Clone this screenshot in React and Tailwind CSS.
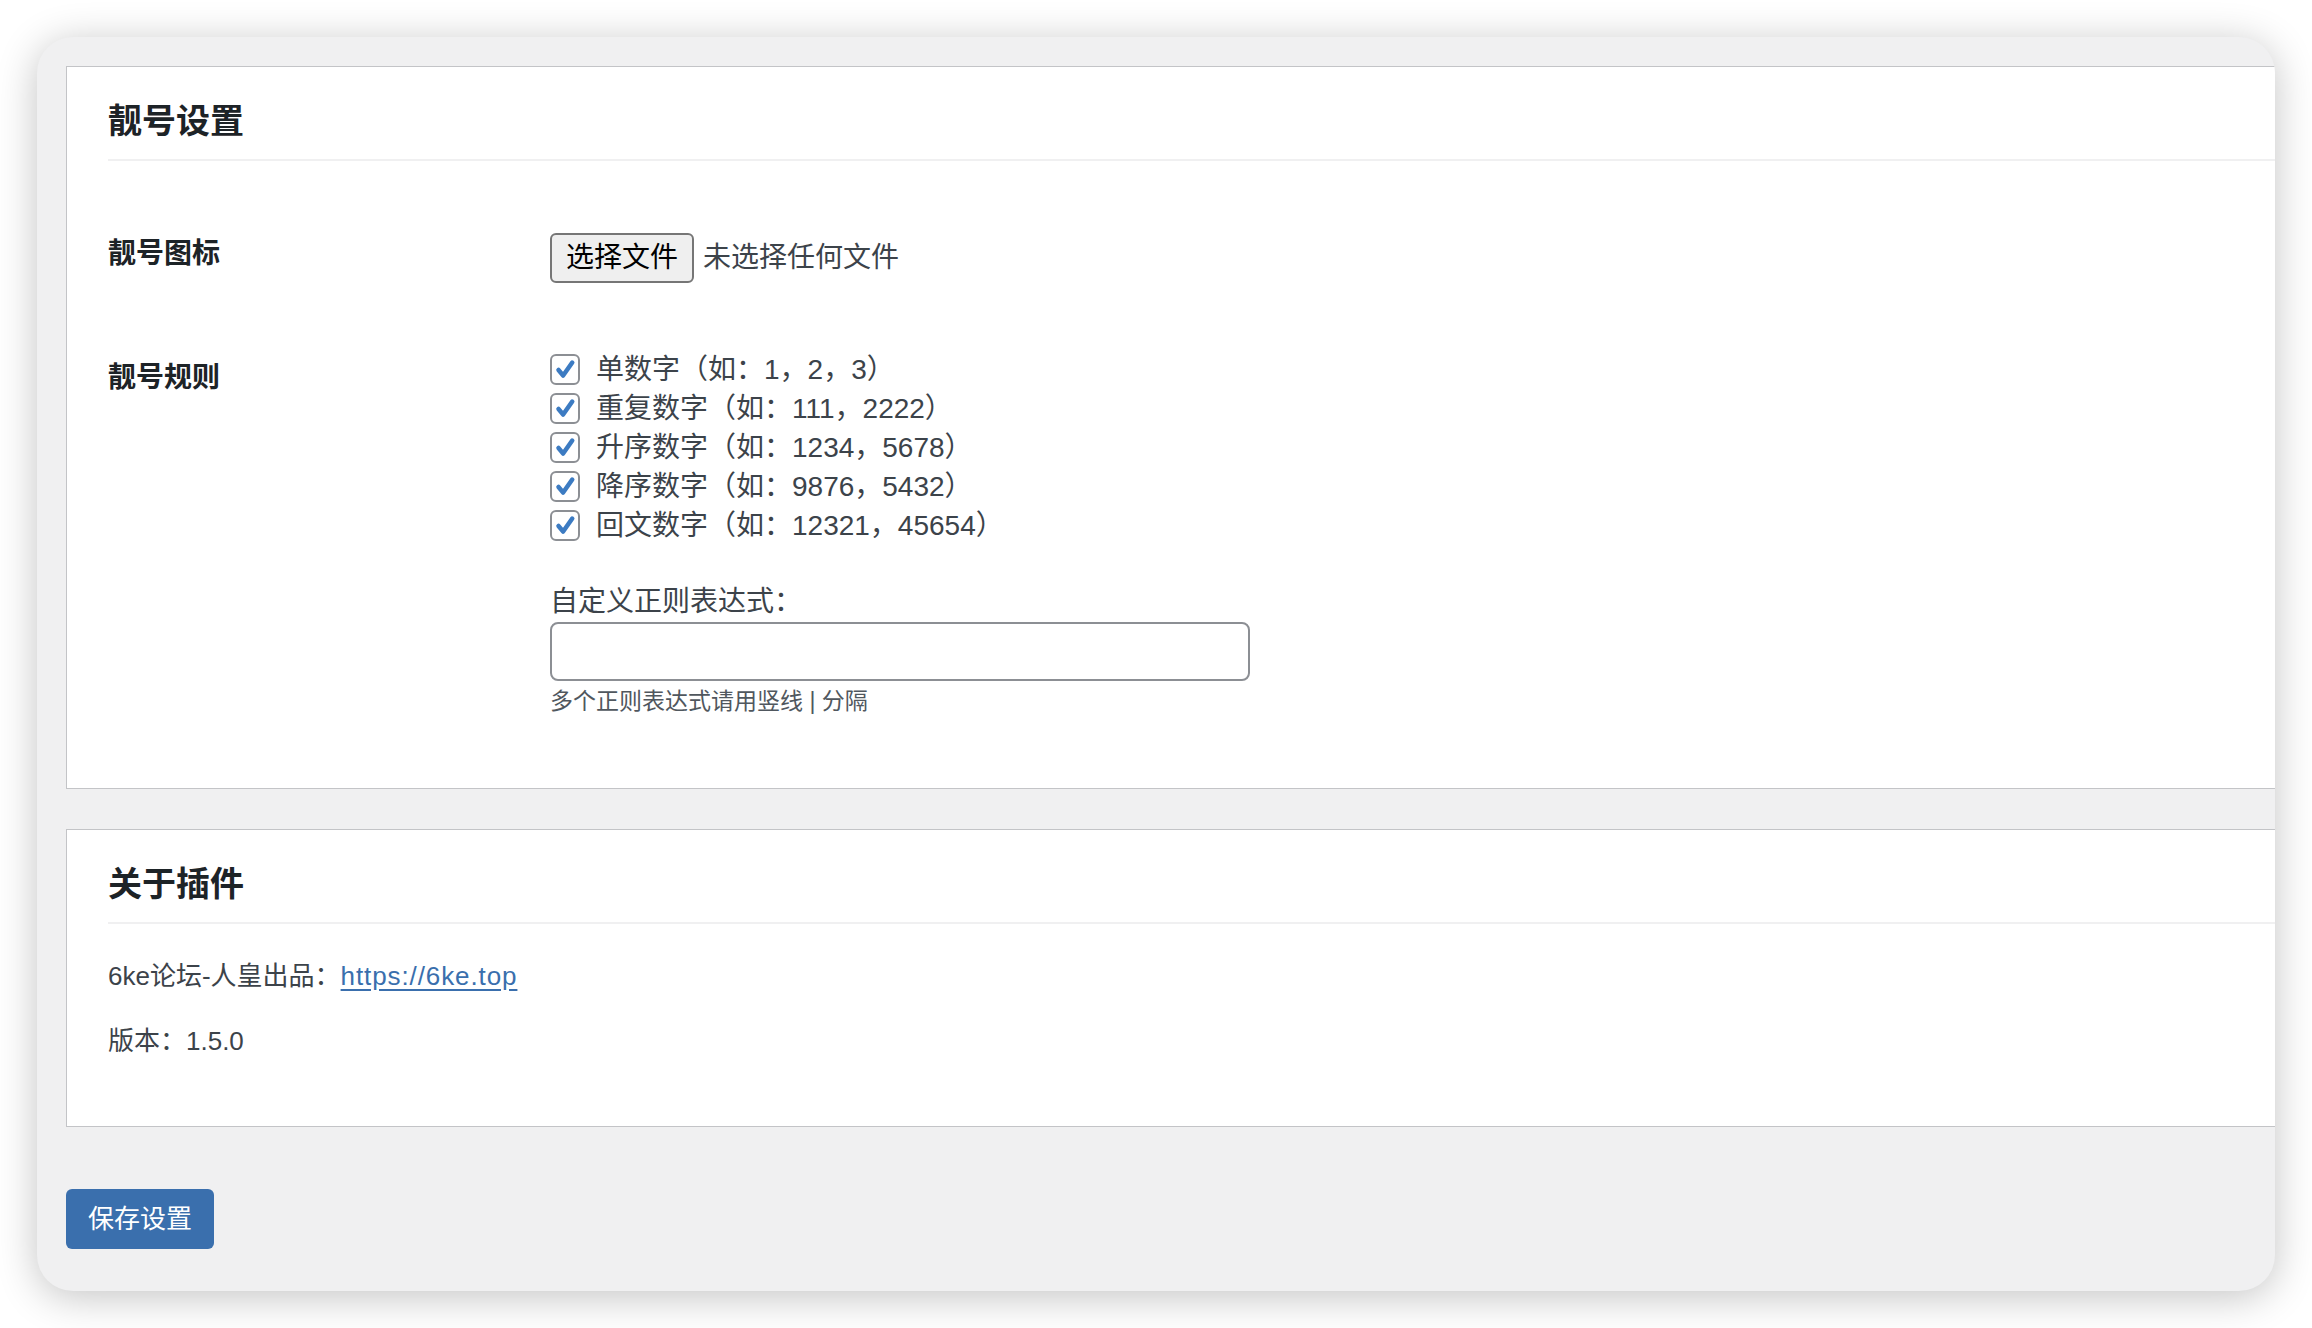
import React from "react";

const rules = [
  "单数字（如：1，2，3）",
  "重复数字（如：111，2222）",
  "升序数字（如：1234，5678）",
  "降序数字（如：9876，5432）",
  "回文数字（如：12321，45654）",
];

const Check = ({ label }) => (
  <label className="flex items-center h-[39px]">
    <span className="w-[30px] h-[31px] rounded-[6px] border-2 border-[#8c8f94] bg-white flex items-center justify-center">
      <svg viewBox="0 0 20 20" className="w-[25px] h-[25px]">
        <path d="M4.4 10.4 L8.1 14.8 L15.4 4.4" stroke="#3c7bc2" strokeWidth="3.6" fill="none" strokeLinecap="round" strokeLinejoin="round" />
      </svg>
    </span>
    <span className="ml-[16px] text-[28px] leading-[39px] text-[#3c434a]">{label}</span>
  </label>
);

const PanelTitle = ({ children }) => (
  <div className="ml-[41px] pt-[30px] pb-[14px] border-b-2 border-[#f0f0f1]">
    <h2 className="text-[34px] leading-[48px] font-bold text-[#1d2327]">{children}</h2>
  </div>
);

export default function App() {
  return (
    <div className="h-[1328px] w-full bg-white p-[37px] font-['Liberation_Sans','Noto_Sans_CJK_SC',sans-serif]">
      <div className="h-full rounded-[36px] bg-[#f0f0f1] shadow-[0_6px_40px_rgba(0,0,0,0.24)] overflow-hidden pl-[29px] pt-[29px]">
        {/* settings panel */}
        <section className="bg-white border border-r-0 border-[#c3c4c7] pb-[69px]">
          <PanelTitle>靓号设置</PanelTitle>

          <div className="ml-[41px] mt-[72px] flex">
            <div className="w-[442px] text-[28px] leading-[42px] font-bold text-[#1d2327]">靓号图标</div>
            <div className="flex items-center">
              <button className="h-[50px] px-[14px] text-[28px] text-black bg-[#efefef] border-2 border-[#767676] rounded-[6px]">选择文件</button>
              <span className="ml-[9px] text-[28px] text-[#3c434a]">未选择任何文件</span>
            </div>
          </div>

          <div className="ml-[41px] mt-[67px] flex">
            <div className="w-[442px] pt-[7px] text-[28px] leading-[42px] font-bold text-[#1d2327]">靓号规则</div>
            <div className="flex flex-col">
              {rules.map((r) => (
                <Check key={r} label={r} />
              ))}
              <div className="mt-[37px] text-[28px] leading-[40px] text-[#3c434a]">自定义正则表达式：</div>
              <input className="w-[700px] h-[59px] border-2 border-[#8c8f94] rounded-[8px] bg-white" />
              <p className="mt-[2px] text-[23px] leading-[36px] text-[#50575e]">多个正则表达式请用竖线 | 分隔</p>
            </div>
          </div>
        </section>

        {/* about panel */}
        <section className="mt-[40px] bg-white border border-r-0 border-[#c3c4c7] pb-[65px]">
          <PanelTitle>关于插件</PanelTitle>
          <div className="ml-[41px] mt-[32px] text-[26px] leading-[40px] text-[#3c434a]">
            <p>
              6ke论坛-人皇出品：
              <a href="#" className="text-[#3a6fad] underline underline-offset-[4px] tracking-[0.9px]">https://6ke.top</a>
            </p>
            <p className="mt-[25px]">版本：1.5.0</p>
          </div>
        </section>

        <button className="mt-[62px] h-[60px] px-[22px] rounded-[6px] bg-[#3a6fad] text-white text-[26px]">保存设置</button>
      </div>
    </div>
  );
}
